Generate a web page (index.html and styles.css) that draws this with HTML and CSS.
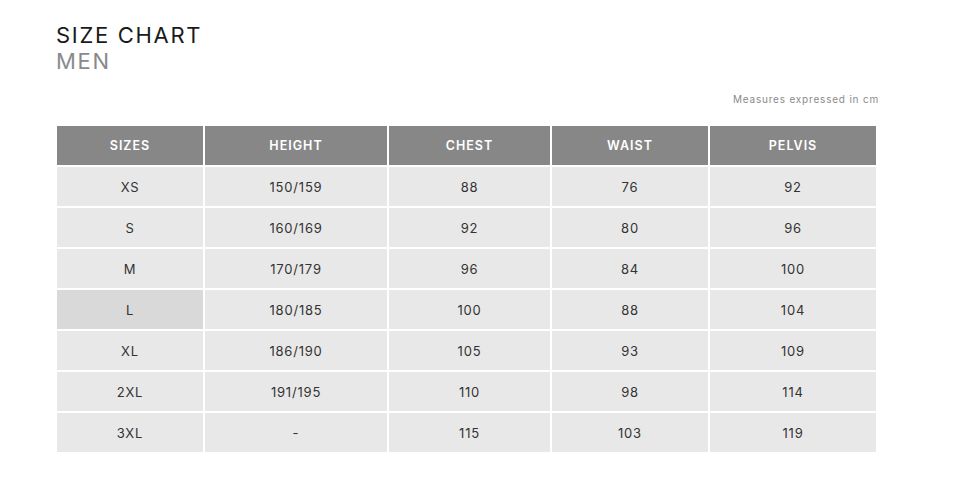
FILE: index.html
```html
<!DOCTYPE html>
<html>
<head>
<meta charset="utf-8">
<link rel="stylesheet" href="styles.css">
</head>
<body>
<div class="page">
  <h1 class="title">SIZE CHART</h1>
  <h2 class="subtitle">MEN</h2>
  <div class="note">Measures expressed in cm</div>
  <table class="chart">
    <colgroup>
      <col class="c1"><col class="c2"><col class="c3"><col class="c4"><col class="c5">
    </colgroup>
    <thead>
      <tr><th>SIZES</th><th>HEIGHT</th><th>CHEST</th><th>WAIST</th><th>PELVIS</th></tr>
    </thead>
    <tbody>
      <tr><td>XS</td><td>150/159</td><td>88</td><td>76</td><td>92</td></tr>
      <tr><td>S</td><td>160/169</td><td>92</td><td>80</td><td>96</td></tr>
      <tr><td>M</td><td>170/179</td><td>96</td><td>84</td><td>100</td></tr>
      <tr><td class="active">L</td><td>180/185</td><td>100</td><td>88</td><td>104</td></tr>
      <tr><td>XL</td><td>186/190</td><td>105</td><td>93</td><td>109</td></tr>
      <tr><td>2XL</td><td>191/195</td><td>110</td><td>98</td><td>114</td></tr>
      <tr><td>3XL</td><td>-</td><td>115</td><td>103</td><td>119</td></tr>
    </tbody>
  </table>
</div>
</body>
</html>
```
FILE: styles.css
```css
body {
  margin: 0;
  background: #fff;
  font-family: "Inter", "Liberation Sans", sans-serif;
}
.page {
  padding: 22px 0 0 55px;
  width: 825px;
}
.title {
  margin: 0;
  font-size: 22px;
  font-weight: 400;
  letter-spacing: 1.7px;
  color: #1a1a1a;
  line-height: 26px;
  padding-left: 1px;
}
.subtitle {
  margin: 0;
  font-size: 22px;
  font-weight: 400;
  letter-spacing: 1.7px;
  color: #8a8a8a;
  line-height: 26px;
  padding-left: 1px;
}
.note {
  text-align: right;
  font-size: 10px;
  color: #8a8a8a;
  letter-spacing: 0.8px;
  margin-top: 19px;
  line-height: 12px;
  margin-right: 1px;
}
.chart {
  margin-top: 19px;
  border-collapse: separate;
  border-spacing: 2px;
  table-layout: fixed;
  width: 823px;
}
.c1 { width: 146px; }
.c2 { width: 182px; }
.c3 { width: 161px; }
.c4 { width: 156px; }
.c5 { width: 166px; }
.chart th {
  background: #878787;
  color: #fff;
  font-weight: 600;
  font-size: 12.5px;
  letter-spacing: 1px;
  height: 39px;
  padding: 0;
  text-align: center;
}
.chart td {
  background: #e8e8e8;
  color: #333;
  font-size: 13px;
  letter-spacing: 0.8px;
  height: 39px;
  padding: 0;
  text-align: center;
}
.chart td.active {
  background: #d9d9d9;
}
```
